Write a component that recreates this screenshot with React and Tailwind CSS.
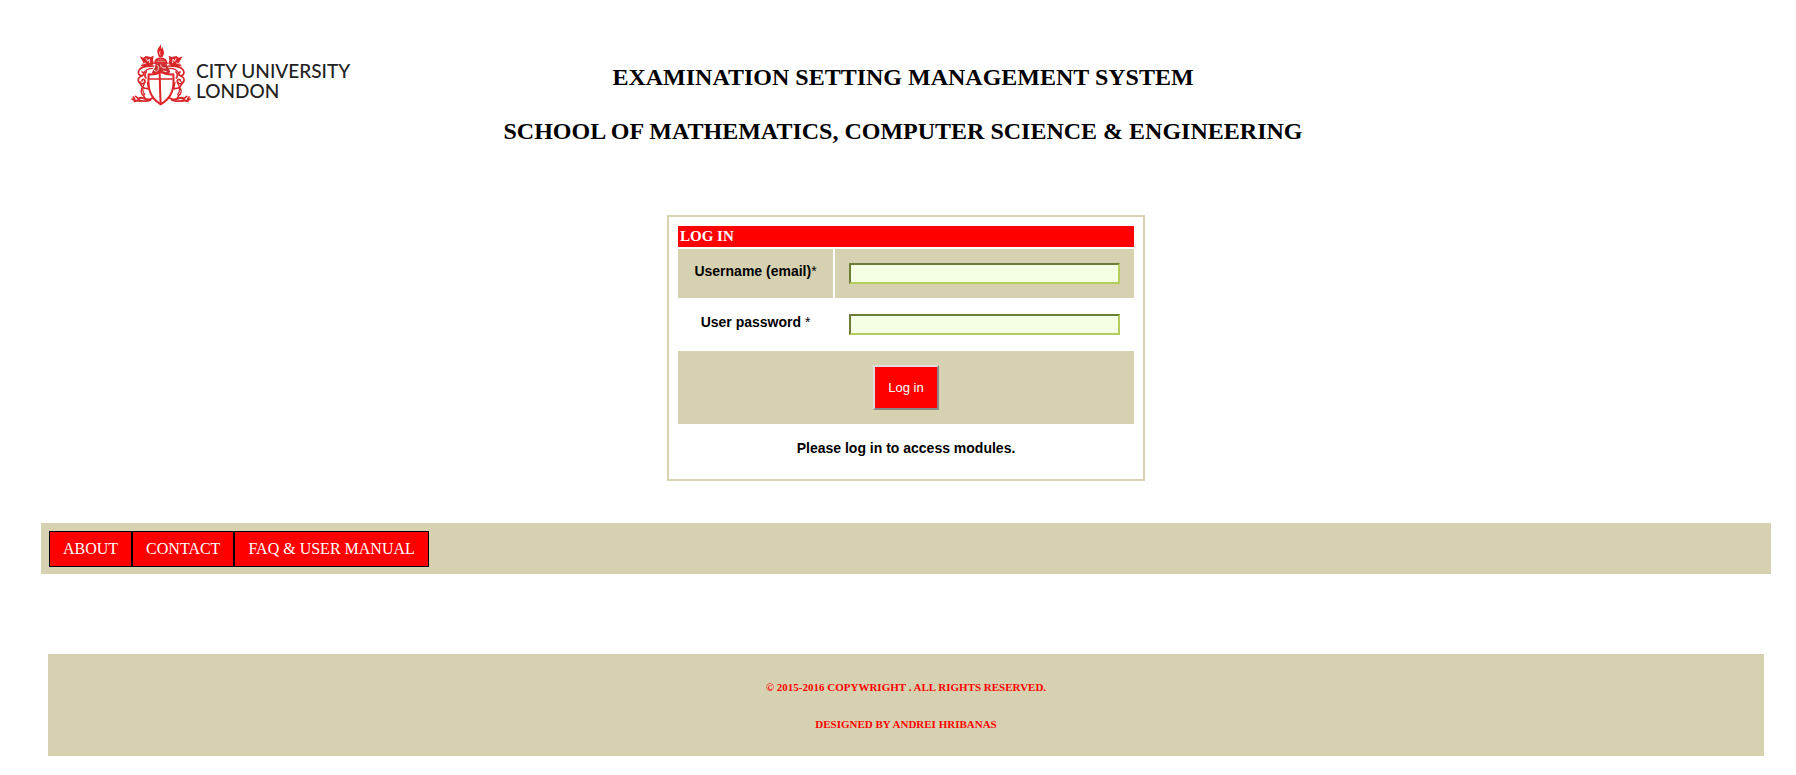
const serif = "font-['Liberation_Serif',serif]";

function Crest() {
  return (
    <svg className="h-[72px] w-[70px] shrink-0" viewBox="45 24 210 216" fill="none" stroke="#d9262b" strokeWidth="5" strokeLinecap="round" strokeLinejoin="round" aria-hidden="true">
      {/* flame */}
      <path d="M152 41c-1 9-10 12-10 23 0 7 3 12 5 18h10c3-6 7-11 4-19-1-5-3-8-3-13-2 3-2 5-2 8-3-5-3-10-4-17Z" fill="#e0252a" stroke="none" />
      <path d="M150 64c-2 4-2 7 1 11" stroke="#fff" strokeWidth="2" />
      {/* crown of the crest */}
      <path d="M135 98c1-8 6-13 17-13s16 5 18 13Z" fill="#f0a0a0" />
      <path d="M139 91h27M132 100h41" strokeWidth="3" />
      {/* beasts' heads */}
      <path d="M89 79l11 4 8-5 14 3 9-4-2 14 3 10-11 8H91l9-11-5-9Z" fill="#d9262b" stroke="none" />
      <path d="M109 86l4 8 5-7 1 11M99 102l8-3" stroke="#fff" strokeWidth="2.5" />
      <path d="M218 79l-11 4-8-5-14 3-9-4 2 14-3 10 11 8h30l-9-11 5-9Z" fill="#d9262b" stroke="none" />
      <path d="M198 86l-4 8-5-7-1 11M208 102l-8-3" stroke="#fff" strokeWidth="2.5" />
      {/* helmet */}
      <path d="M137 101h32l6 10 6 15-12 9-15-5-18 6-11-8 9-14Z" fill="#c9302f" stroke="none" />
      <path d="M142 106c6 4 5 11 0 16M152 105c0 7 6 10 15 9M133 121l6 4M160 123l9 2" stroke="#fff" strokeWidth="2.5" />
      {/* mantling */}
      <path d="M131 108c-18 1-35-1-43 11-6 10-2 18 7 18 8-1 8-11 1-11M176 108c18 1 35-1 43 11 6 10 2 18-7 18-8-1-8-11-1-11" />
      <path d="M128 115c-14 0-23 5-28 16M179 115c14 0 23 5 28 16" strokeWidth="4" />
      <path d="M95 138c-11 4-13 12-7 20 6 7 19 2 17-6-2-6-10-4-9 1M212 138c11 4 13 12 7 20-6 7-19 2-17-6 2-6 10-4 9 1" />
      <path d="M109 126c-5 6-6 12-1 18M198 126c5 6 6 12 1 18M91 156c1 14 9 20 22 20M216 156c-1 14-9 20-22 20" />
      <path d="M103 161c-6 10-8 21 1 33M204 161c6 10 8 21-1 33M96 174c-4 8-3 15 2 21M211 174c4 8 3 15-2 21M112 157l4 20M195 157l-4 20" strokeWidth="4" />
      {/* foliage */}
      <path d="M128 204c-17 13-27-4-39 0-6 3-3 10 3 8M179 204c17 13 27-4 39 0 6 3 3 10-3 8" strokeWidth="6" />
      <path d="M121 211c-17 6-28 0-36 1-8 2-12-2-19-5M186 211c17 6 28 0 36 1 8 2 12-2 19-5M74 207l-4-6M233 207l4-6M83 211l-10 3M224 211l10 3M105 205l-5-10M202 205l5-10M77 199l8 7M230 199l-8 7" />
      {/* shield */}
      <path d="M116 133c13 2 24-1 37-7 13 6 23 9 37 7 3 43-3 70-38 90-33-20-39-47-36-90Z" fill="#fff" stroke="#e0252a" strokeWidth="6" />
      <path d="M119 147h67" stroke="#e0252a" strokeWidth="5" />
      <path d="M149 130c1 28 1 60 3 90" stroke="#e0252a" strokeWidth="6" />
    </svg>
  );
}

const inputClass =
  "block h-[21px] w-full border-2 border-t-[#6b7d38] border-l-[#6b7d38] border-r-[#b4cd5f] border-b-[#b4cd5f] bg-[#f5ffe4] px-1 text-[13px] outline-none";
const labelText = "text-center text-[14px] leading-4 font-bold";

export default function App() {
  return (
    <div className="bg-white pt-[38px] pr-[25px] pb-[19px] pl-[41px] font-['Liberation_Sans',sans-serif] text-black">
      <header className="grid grid-cols-[1fr_auto_1fr] pr-[6px]">
        <a href="#" className="flex items-start pl-[84px]">
          <Crest />
          <span className="pt-[23px] pl-[1px] font-[Lato,sans-serif] text-[19px] leading-[20px] font-medium whitespace-nowrap text-[#222]">
            CITY UNIVERSITY
            <br />
            LONDON
          </span>
        </a>
        <div className={`${serif} pt-[25px] text-center text-[24px] leading-[28px] font-bold`}>
          <h1>EXAMINATION SETTING MANAGEMENT SYSTEM</h1>
          <h2 className="mt-[26px]">SCHOOL OF MATHEMATICS, COMPUTER SCIENCE &amp; ENGINEERING</h2>
        </div>
      </header>

      <main className="mt-[70px] flex justify-center">
        <form className="flex w-[478px] max-w-full flex-col gap-[2px] border-2 border-[#d6d1b1] p-[9px]" onSubmit={(e) => e.preventDefault()}>
          <h3 className={`${serif} h-[21px] bg-[#ff0000] pl-[2px] text-[15px] leading-[21px] font-bold text-white`}>LOG IN</h3>
          <div className="grid grid-cols-[155px_1fr] gap-[2px]">
            <label htmlFor="username" className={`${labelText} bg-[#d6d1b1] pt-[14px]`}>
              Username (email)<span className="font-normal">*</span>
            </label>
            <div className="bg-[#d6d1b1] p-[14px]">
              <input id="username" type="email" className={inputClass} />
            </div>
            <label htmlFor="password" className={`${labelText} pt-[14px]`}>
              User password <span className="font-normal">*</span>
            </label>
            <div className="p-[14px]">
              <input id="password" type="password" className={inputClass} />
            </div>
          </div>
          <div className="flex justify-center bg-[#d6d1b1] p-[14px]">
            <button type="submit" className="h-[45px] border-2 border-t-[#dedede] border-l-[#dedede] border-r-[#868686] border-b-[#868686] bg-[#ff0000] px-[13px] text-[13px] text-white">
              Log in
            </button>
          </div>
          <p className={`${labelText} py-[14px]`}>Please log in to access modules.</p>
        </form>
      </main>

      <nav className={`${serif} mt-[42px] flex bg-[#d6d1b1] px-2 pt-2 pb-[7px] text-[16px] leading-[34px] text-white`}>
        <a href="#about" className="border border-black bg-[#ff0000] px-[13px]">ABOUT</a>
        <a href="#contact" className="border border-black bg-[#ff0000] px-[13px]">CONTACT</a>
        <a href="#faq" className="border border-black bg-[#ff0000] px-[13px]">FAQ &amp; USER MANUAL</a>
      </nav>

      <footer className={`${serif} mt-[80px] mx-[7px] flex flex-col gap-[25px] bg-[#d6d1b1] pt-[27px] pb-[26px] text-center text-[11px] leading-[12px] font-bold text-[#ff0000]`}>
        <p>© 2015-2016 COPYWRIGHT . ALL RIGHTS RESERVED.</p>
        <p>DESIGNED BY ANDREI HRIBANAS</p>
      </footer>
    </div>
  );
}
